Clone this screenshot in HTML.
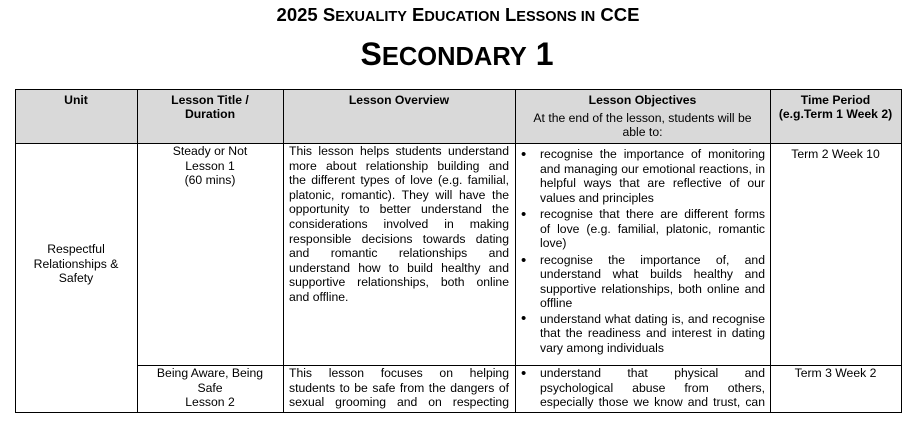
<!DOCTYPE html>
<html><head><meta charset="utf-8"><style>
body{margin:0;width:921px;height:425px;background:#fff;position:relative;font-family:"Liberation Sans",Arial,sans-serif;color:#000;overflow:hidden}
.a{position:absolute;white-space:nowrap}
.l{position:absolute;font-size:12.2px;line-height:14px;white-space:nowrap}
.j{text-align:justify;text-align-last:justify}
.c{text-align:center}
.b{font-weight:bold}
.v{position:absolute;background:#000;width:1px}
.h{position:absolute;background:#000;height:1px}
.bul{position:absolute;font-size:15px;line-height:14px}
</style></head><body>
<div class="a b" style="left:0;width:916px;top:4px;text-align:center;font-size:18.5px;">2025 S<span style="font-size:14.5px">EXUALITY</span> E<span style="font-size:14.5px">DUCATION</span> L<span style="font-size:14.5px">ESSONS IN</span> CCE</div>
<div class="a b" style="left:0;width:914px;top:36px;text-align:center;font-size:32px;">S<span style="font-size:25.5px">ECONDARY</span> 1</div>
<div style="position:absolute;left:15px;top:89px;width:886px;height:54px;background:#d9d9d9"></div>
<div class="h" style="left:15px;top:89px;width:887px"></div>
<div class="h" style="left:15px;top:143px;width:887px"></div>
<div class="h" style="left:137px;top:365px;width:765px"></div>
<div class="h" style="left:15px;top:412px;width:887px"></div>
<div class="v" style="left:15px;top:89px;height:324px"></div>
<div class="v" style="left:137px;top:89px;height:324px"></div>
<div class="v" style="left:283px;top:89px;height:324px"></div>
<div class="v" style="left:515px;top:89px;height:324px"></div>
<div class="v" style="left:770px;top:89px;height:324px"></div>
<div class="v" style="left:901px;top:89px;height:324px"></div>

<div class="l b c" style="left:15px;width:122px;top:93px">Unit</div>
<div class="l b c" style="left:137px;width:146px;top:93px">Lesson Title /<br>Duration</div>
<div class="l b c" style="left:283px;width:232px;top:93px">Lesson Overview</div>
<div class="l b c" style="left:515px;width:255px;top:93px">Lesson Objectives</div>
<div class="l c" style="left:515px;width:255px;top:111px;line-height:14px">At the end of the lesson, students will be<br>able to:</div>
<div class="l b c" style="left:770px;width:131px;top:93px">Time Period<br>(e.g.Term 1 Week 2)</div>

<div class="l c" style="left:15px;width:122px;top:242px;line-height:14.6px">Respectful<br>Relationships &amp;<br>Safety</div>
<div class="l c" style="left:137px;width:146px;top:144px;line-height:14.6px">Steady or Not<br>Lesson 1<br>(60 mins)</div>
<div class="l c" style="left:137px;width:146px;top:366px;line-height:14.6px">Being Aware, Being<br>Safe<br>Lesson 2</div>
<div class="l c" style="left:770px;width:131px;top:147px">Term 2 Week 10</div>
<div class="l c" style="left:770px;width:131px;top:366px">Term 3 Week 2</div>

<div style="position:absolute;left:289px;width:220px;top:144px;font-size:12.2px;line-height:14.6px">
<div class="j">This lesson helps students understand</div>
<div class="j">more about relationship building and</div>
<div class="j">the different types of love (e.g. familial,</div>
<div class="j">platonic, romantic). They will have the</div>
<div class="j">opportunity to better understand the</div>
<div class="j">considerations involved in making</div>
<div class="j">responsible decisions towards dating</div>
<div class="j">and romantic relationships and</div>
<div class="j">understand how to build healthy and</div>
<div class="j">supportive relationships, both online</div>
<div>and offline.</div>
</div>
<div style="position:absolute;left:289px;width:220px;top:366px;font-size:12.2px;line-height:14.6px">
<div class="j">This lesson focuses on helping</div>
<div class="j">students to be safe from the dangers of</div>
<div class="j">sexual grooming and on respecting</div>
</div>

<div style="position:absolute;left:540px;width:225px;top:147px;font-size:12.2px;line-height:14.5px">
<div class="j">recognise the importance of monitoring</div>
<div class="j">and managing our emotional reactions, in</div>
<div class="j">helpful ways that are reflective of our</div>
<div style="margin-bottom:2px">values and principles</div>
<div class="j">recognise that there are different forms</div>
<div class="j">of love (e.g. familial, platonic, romantic</div>
<div style="margin-bottom:2px">love)</div>
<div class="j">recognise the importance of, and</div>
<div class="j">understand what builds healthy and</div>
<div class="j">supportive relationships, both online and</div>
<div style="margin-bottom:1px">offline</div>
<div class="j">understand what dating is, and recognise</div>
<div class="j">that the readiness and interest in dating</div>
<div>vary among individuals</div>
</div>
<div style="position:absolute;left:540px;width:225px;top:366px;font-size:12.2px;line-height:14.6px">
<div class="j">understand that physical and</div>
<div class="j">psychological abuse from others,</div>
<div class="j">especially those we know and trust, can</div>
</div>
<div class="bul" style="left:521px;top:148px">•</div>
<div class="bul" style="left:521px;top:208px">•</div>
<div class="bul" style="left:521px;top:254px">•</div>
<div class="bul" style="left:521px;top:312px">•</div>
<div class="bul" style="left:521px;top:367px">•</div>
</body></html>
